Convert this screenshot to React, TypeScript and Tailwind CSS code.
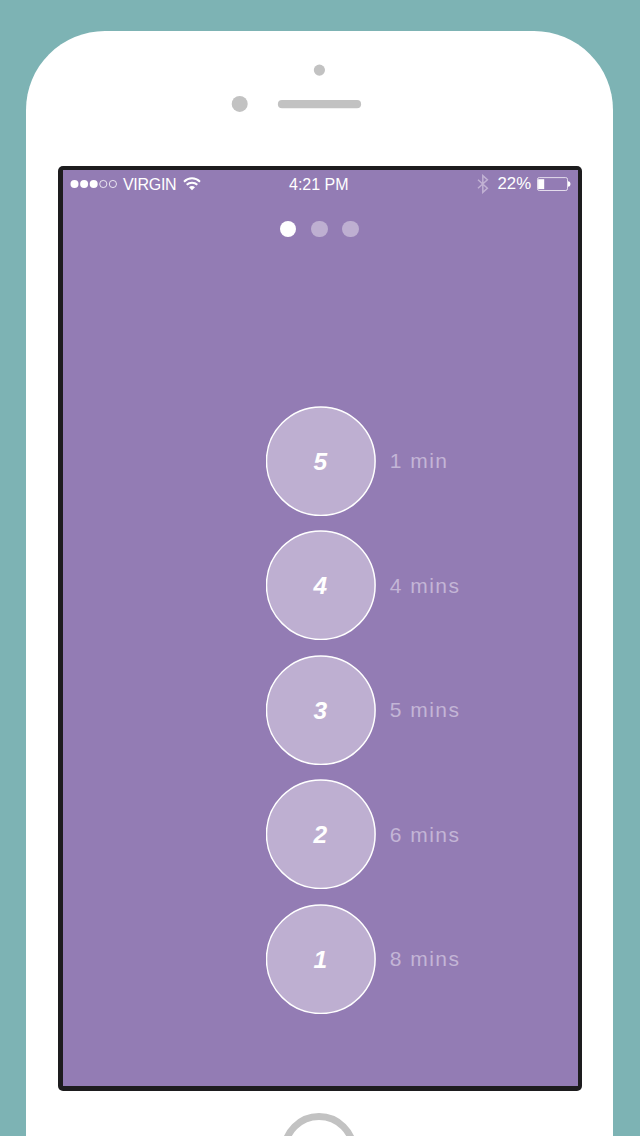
const steps = [
  { id: 5, label: '1 min' },
  { id: 4, label: '4 mins' },
  { id: 3, label: '5 mins' },
  { id: 2, label: '6 mins' },
  { id: 1, label: '8 mins' },
];

function SignalDots() {
  return (
    <svg className="h-[10px] w-[48px]" viewBox="0 0 48 10" fill="white">
      <circle cx="4.5" cy="5" r="4" />
      <circle cx="14.1" cy="5" r="4" />
      <circle cx="23.7" cy="5" r="4" />
      <circle cx="33.3" cy="5" r="3.6" fill="none" stroke="white" strokeWidth="0.8" />
      <circle cx="42.9" cy="5" r="3.6" fill="none" stroke="white" strokeWidth="0.8" />
    </svg>
  );
}

function WifiIcon() {
  return (
    <svg className="h-[14px] w-[18px]" viewBox="0 0 18 14" fill="none" stroke="white" strokeWidth="2">
      <path d="M1 4.7C5.6 .1 12.4 .1 17 4.7" />
      <path d="M3.7 7.8C6.6 4.9 11.4 4.9 14.3 7.8" />
      <path d="M6 10.2C7.8 8.5 10.2 8.5 12 10.2L9 13.3Z" fill="white" stroke="none" />
    </svg>
  );
}

function BluetoothIcon() {
  return (
    <svg className="h-[20px] w-[12px]" viewBox="0 0 12 20" fill="none" stroke="#c1b1d3" strokeWidth="1.5">
      <path d="M1 5.7L10.4 14.2L5.8 18.4V1.6L10.4 5.8L1 14.3" />
    </svg>
  );
}

function BatteryIcon() {
  return (
    <svg className="h-[16px] w-[35px]" viewBox="0 0 35 16">
      <rect x="1.5" y="1.6" width="30" height="12.9" rx="1.7" fill="none" stroke="#e4dcec" strokeWidth="1" />
      <rect x="2.1" y="3.2" width="6.1" height="9.9" fill="white" />
      <path d="M32 5.2C33.6 5.2 34.5 6.5 34.5 8S33.6 10.8 32 10.8Z" fill="white" />
    </svg>
  );
}

function StatusBar() {
  return (
    <div className="flex h-[29px] items-center text-[16px] leading-none text-white">
      <div className="flex w-[226px] items-center pl-[7.5px]">
        <SignalDots />
        <span className="ml-[4.5px] w-[60.5px] pt-px tracking-[-0.3px]">VIRGIN</span>
        <WifiIcon />
      </div>
      <span className="w-[64px] pt-px whitespace-nowrap">4:21 PM</span>
      <div className="ml-auto flex items-center pr-[7px]">
        <BluetoothIcon />
        <span className="ml-[8px] w-[39px] text-[16.8px]">22%</span>
        <BatteryIcon />
      </div>
    </div>
  );
}

export default function App() {
  return (
    <div className="h-[1136px] w-[640px] overflow-hidden bg-[#7db3b4] pt-[31.4px] pl-[26px] font-['Liberation_Sans',sans-serif]">
      <div className="h-[1105px] w-[586.7px] overflow-hidden rounded-t-[79px] bg-white pl-[32.4px]">
        <header className="h-[134.2px]">
          <svg className="h-[134px] w-[524px]" viewBox="58 31 524 134" fill="#c2c2c2">
            <circle cx="319.4" cy="70.1" r="5.6" />
            <circle cx="239.7" cy="103.9" r="8" />
            <rect x="277.9" y="100" width="83.2" height="8.3" rx="4.1" />
          </svg>
        </header>

        <main className="h-[925.4px] w-[523.8px] rounded-[5px] bg-[#1d1c1e] pt-[4.4px] pl-[4.6px]">
          <div className="h-[916px] w-[515.5px] bg-[#937cb4]">
            <StatusBar />
            <nav className="flex h-[62px] justify-center gap-[14.6px] pt-[21.6px] pr-[3px]">
              <span className="size-[16.6px] rounded-full bg-white" />
              <span className="size-[16.6px] rounded-full bg-[#beafd1]" />
              <span className="size-[16.6px] rounded-full bg-[#beafd1]" />
            </nav>
            <ul className="flex flex-col gap-[14.5px] pt-[144.9px] pl-[202.7px]">
              {steps.map((step) => (
                <li key={step.id} className="flex items-center">
                  <svg className="size-[110px]" viewBox="0 0 110 110">
                    <circle cx="54.8" cy="55.2" r="54.3" fill="#beafd1" stroke="white" strokeWidth="1.5" />
                    <text x="54.3" y="64" textAnchor="middle" fill="white" className="text-[24.5px] font-bold italic">
                      {step.id}
                    </text>
                  </svg>
                  <span className="pl-[14px] text-[21px] leading-none tracking-[1.5px] text-[#c3b5d6]">{step.label}</span>
                </li>
              ))}
            </ul>
          </div>
        </main>

        <footer className="pt-[22px] pl-[223px]">
          <div className="size-[76px] rounded-full border-[7px] border-[#c2c2c2]" />
        </footer>
      </div>
    </div>
  );
}
